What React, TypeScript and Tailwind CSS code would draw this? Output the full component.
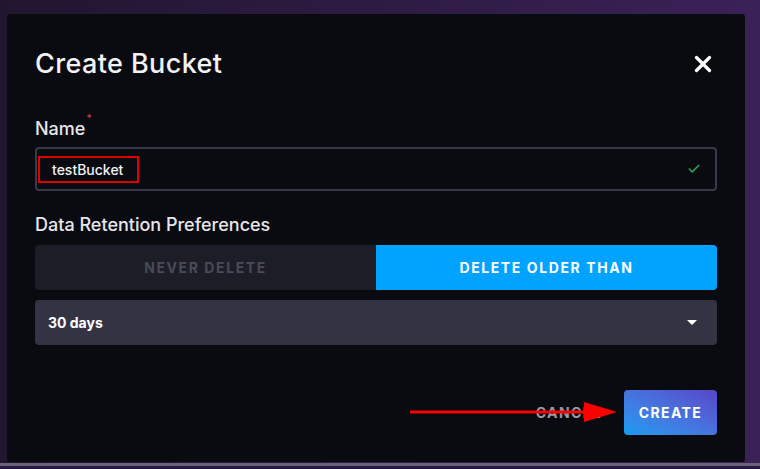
import { Check, X } from 'lucide-react';

const font = { fontFamily: 'Inter, "Open Sans", sans-serif' };

// 보존 설정 토글
const RetentionToggle = () => (
  <div className="mt-[7px] flex h-[45px] w-full">
    <div className="flex flex-1 items-center justify-center rounded-l-sm bg-[#1d1d28] text-[14px] font-bold tracking-[1.6px] text-[#4a4a58]">
      NEVER DELETE
    </div>
    <div className="flex flex-1 items-center justify-center rounded-r-sm bg-[#00a3ff] text-[14px] font-bold tracking-[1.6px] text-white">
      DELETE OLDER THAN
    </div>
  </div>
);

export default function App() {
  return (
    <div className="h-[469px] w-[760px] overflow-hidden bg-[#2a1942]" style={font}>
      <div className="flex h-[466px] border-b-[3px] border-[#6a6279] bg-gradient-to-r from-[#22152f] to-[#3a2158] pl-[7px] pt-[14px]">
        <div className="relative flex h-[448px] w-[738px] flex-col rounded-[3px] bg-[#0a0b10] px-[28px] pt-[30px]">
          {/* 헤더 */}
          <div className="flex h-[40px] items-center justify-between">
            <h1 className="text-[27px] font-medium tracking-[0.4px] text-[#f2f2f5]">Create Bucket</h1>
            <X className="mr-[1px] h-[26px] w-[26px] text-white" strokeWidth={3} />
          </div>

          {/* 이름 입력 */}
          <label className="mt-[31px] flex h-[22px] items-start text-[18px] font-medium text-[#e6e6ec]">
            Name<span className="ml-[1px] mt-[-4px] text-[10px] text-[#e03545]">*</span>
          </label>
          <div className="mt-[10px] flex h-[44px] w-full items-center justify-between rounded-sm border-2 border-[#38384a] pl-[1px] pr-[14px]">
            <div className="flex h-[27px] w-[101px] items-center border-2 border-[#e00000] pl-[12px] text-[14px] font-medium text-[#f0f0f4]">
              testBucket
            </div>
            <Check className="h-[14px] w-[14px] text-[#2e9b52]" strokeWidth={3} />
          </div>

          <div className="mt-[20px] text-[18px] font-medium text-[#e6e6ec]">Data Retention Preferences</div>

          <RetentionToggle />

          {/* 기간 선택 */}
          <div className="mt-[10px] flex h-[45px] w-full items-center justify-between rounded-sm bg-[#333344] pl-[13px] pr-[20px]">
            <span className="text-[14px] font-bold text-white">30 days</span>
            <span className="h-0 w-0 border-x-[5px] border-t-[5px] border-x-transparent border-t-white" />
          </div>

          {/* 버튼 */}
          <div className="mt-auto mb-[27px] flex items-center justify-end gap-[22px]">
            <span className="text-[14px] font-bold tracking-[1.4px] text-[#9a9aa4]">CANCEL</span>
            <button className="h-[45px] w-[93px] rounded-sm bg-gradient-to-tr from-[#0a9cf2] to-[#5546c8] text-[14px] font-bold tracking-[1.4px] text-white">
              CREATE
            </button>
          </div>

          {/* 빨간 화살표 주석 */}
          <svg className="absolute left-[403px] top-[388px]" width="210" height="24" viewBox="0 0 210 24">
            <line x1="0" y1="10" x2="180" y2="10" stroke="#ff0000" strokeWidth="3" />
            <polygon points="174,0 207,10 174,20" fill="#ff0000" />
          </svg>
        </div>
      </div>
    </div>
  );
}
